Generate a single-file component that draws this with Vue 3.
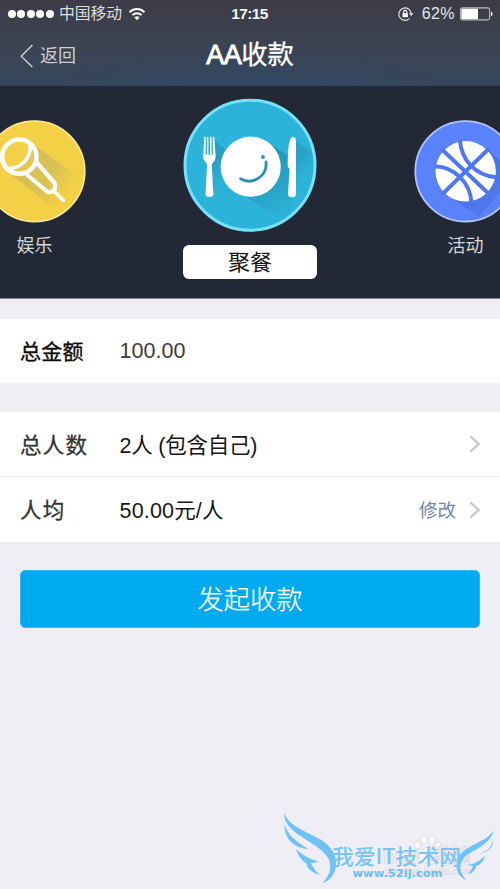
<script setup>
const signal = [0, 1, 2, 3, 4]
</script>

<template>
  <div class="screen">
    <header class="header">
      <div class="status">
        <div class="carrier">
          <i v-for="n in signal" :key="n" class="dot"></i>
          <span class="carrier-name">中国移动</span>
          <svg class="wifi" viewBox="0 0 18 14" width="18" height="14">
            <path d="M1.500 5.200a10.600 10.600 0 0 1 15 0" fill="none" stroke="#fff" stroke-width="2" />
            <path d="M4.400 8.200a6.500 6.500 0 0 1 9.200 0" fill="none" stroke="#fff" stroke-width="1.900" />
            <path d="M6.400 10.500a3.800 3.800 0 0 1 5.200 0L9 13.300z" fill="#fff" />
          </svg>
        </div>
        <div class="time">17:15</div>
        <div class="power">
          <svg viewBox="0 0 16 14" width="16" height="14">
            <path d="M13.200 6.200A6.200 6.200 0 1 0 11.400 11.600" fill="none" stroke="#e4e5e8" stroke-width="1.200" />
            <path d="M10.800 6.200h4.800l-2.400 2.800z" fill="#e4e5e8" />
            <rect x="4.500" y="6.200" width="5.400" height="4" fill="#fff" />
            <path d="M5.600 6.400V5a1.600 1.600 0 0 1 3.200 0v1.400" fill="none" stroke="#fff" stroke-width="1.100" />
          </svg>
          <span class="percent">62%</span>
          <svg viewBox="0 0 33 14" width="33" height="14">
            <rect x=".6" y=".9" width="29" height="12" rx="1.800" fill="none" stroke="#b9bbc1" stroke-width="1.100" />
            <rect x="1.400" y="1.700" width="16.600" height="10.400" fill="#fff" />
            <path d="M31 4.600q1.600.5 1.600 2.300T31 9.200z" fill="#fff" />
          </svg>
        </div>
      </div>
      <div class="nav">
        <div class="back">
          <svg viewBox="0 0 14 24" width="14" height="24">
            <path d="M12.400 1L1.200 12.200 12.400 23" fill="none" stroke="#d3d7dd" stroke-width="1.300" />
          </svg>
          <span>返回</span>
        </div>
        <h1 class="title"><span class="latin">AA</span>收款</h1>
      </div>
    </header>

    <section class="carousel">
      <div class="slide side">
        <svg viewBox="-17 120 103 103" width="103" height="103">
          <defs>
            <linearGradient id="micShade" gradientUnits="userSpaceOnUse" x1="30" y1="160" x2="70" y2="191">
              <stop offset="0" stop-color="#d5bd52" />
              <stop offset=".5" stop-color="#dbc254" />
              <stop offset="1" stop-color="#f4d047" />
            </linearGradient>
          </defs>
          <circle cx="34.500" cy="171.300" r="50.500" fill="#f4d047" />
          <path d="M33 144L84 181Q78 200 60 213L8 172z" fill="url(#micShade)" />
          <circle cx="34.500" cy="171.300" r="50.300" fill="none" stroke="#fbe694" stroke-width="1.700" />
          <circle cx="19.300" cy="156.700" r="17" fill="#f4d047" />
          <path d="M19.300 174a17 17 0 0 0 17-17Q34 149 30 147q-2 18-24 22 6 5 13.300 5z" fill="#e4c64e" />
          <g fill="none" stroke="#fff" stroke-width="4.600" stroke-linecap="round" stroke-linejoin="round">
            <circle cx="19.300" cy="156.700" r="17.200" />
            <path d="M30 145.500Q31.500 155 23.500 162.500T6 168" stroke-width="3.600" />
            <path d="M36.700 162.500L54.300 182.500q1.600 3 0 7.500-3.300 3.300-7.300 1.500L26.700 174.500" stroke-width="4.200" />
            <path d="M54 191l9.200 9.400" stroke-width="3.800" />
          </g>
        </svg>
        <span class="caption">娱乐</span>
      </div>

      <div class="slide main">
        <svg viewBox="183 98 134 134" width="134" height="134">
          <defs>
            <linearGradient id="dishShade" gradientUnits="userSpaceOnUse" x1="255" y1="170" x2="286" y2="214">
              <stop offset="0" stop-color="#2499bb" />
              <stop offset=".55" stop-color="#28a6ca" />
              <stop offset="1" stop-color="#2cb3d9" />
            </linearGradient>
            <linearGradient id="forkShade" gradientUnits="userSpaceOnUse" x1="211" y1="165" x2="225" y2="179">
              <stop offset="0" stop-color="#269fc2" />
              <stop offset="1" stop-color="#2cb3d9" />
            </linearGradient>
            <linearGradient id="knifeShade" gradientUnits="userSpaceOnUse" x1="295" y1="160" x2="309" y2="175">
              <stop offset="0" stop-color="#28a3c7" />
              <stop offset="1" stop-color="#2cb3d9" />
            </linearGradient>
          </defs>
          <circle cx="250" cy="165.200" r="66" fill="#2cb3d9" />
          <path d="M214 140L238 160 238 212 209 197z" fill="url(#forkShade)" />
          <path d="M270 143L312 174 286 221 229 187z" fill="url(#dishShade)" />
          <path d="M295 140L313 153V175L300 207 290 197z" fill="url(#knifeShade)" />
          <circle cx="250" cy="165.200" r="65" fill="none" stroke="#77e1fb" stroke-width="3" />
          <path d="M204.400 136.800h1.300v18h1.300v-18h1.400v18h1.700v-18h1.400v18h1.300v-18h1.500l1.400 20.500q0 2.200-2.700 5.200l-1.200 2 1.500 29.300q0 3.300-3.900 3.300t-3.900-3.300l1.600-29.300-1.200-2q-2.800-3-2.800-5.200z" fill="#fff" />
          <circle cx="250.700" cy="166.700" r="30.100" fill="#fff" />
          <path d="M240.600 178.700A17 17 0 0 0 266 162" fill="none" stroke="#2293b2" stroke-width="2.800" stroke-linecap="round" />
          <circle cx="263" cy="157" r="1.900" fill="#2293b2" />
          <path d="M293 136.700q3 0 3 4.300v53q0 3.300-4 3.300t-4-3.300l1.600-25-1.900-2.500q0-23 3-28 1-1.800 2.300-1.800z" fill="#fff" />
        </svg>
        <span class="selected">聚餐</span>
      </div>

      <div class="slide side">
        <svg viewBox="414 120 103 103" width="103" height="103">
          <defs>
            <linearGradient id="ballShade" gradientUnits="userSpaceOnUse" x1="475" y1="180" x2="497" y2="212">
              <stop offset="0" stop-color="#4a74e6" />
              <stop offset="1" stop-color="#5179ed" />
            </linearGradient>
          </defs>
          <circle cx="465.500" cy="171.300" r="50.500" fill="#5b82fd" />
          <path d="M488 150L515 175 479 217 446 194z" fill="url(#ballShade)" />
          <circle cx="465.500" cy="171.300" r="50.200" fill="none" stroke="#b1c3fd" stroke-width="1.800" />
          <circle cx="465.700" cy="171.300" r="30.200" fill="#fff" />
          <g fill="none" stroke="#4f78ee" stroke-width="3.900">
            <path d="M442 194.500L489 148.500M442 149.500L489 194" />
            <path d="M459.800 140C461.500 159 474 175.500 497 177.500M434.500 166.300C455 167 470.500 183 471.500 203" />
          </g>
        </svg>
        <span class="caption">活动</span>
      </div>
    </section>

    <main>
      <div class="group amount">
        <div class="row">
          <span class="label strong">总金额</span>
          <span class="value money">100.00</span>
        </div>
      </div>

      <div class="group">
        <div class="row people">
          <span class="label">总人数</span>
          <span class="value count">2人 (包含自己)</span>
          <svg class="chevron" viewBox="0 0 12 18" width="12" height="18">
            <path d="M1.300 1.200L9.800 8.900 1.300 16.600" fill="none" stroke="#c7c7cc" stroke-width="2.200" />
          </svg>
        </div>
        <div class="row average">
          <span class="label">人均</span>
          <span class="value per">50.00元/人</span>
          <span class="edit">修改</span>
          <svg class="chevron" viewBox="0 0 12 18" width="12" height="18">
            <path d="M1.300 1.200L9.800 8.900 1.300 16.600" fill="none" stroke="#c7c7cc" stroke-width="2.200" />
          </svg>
        </div>
      </div>

      <button class="submit">发起收款</button>
    </main>

    <svg class="watermark" viewBox="270 800 230 89" width="230" height="89">
      <g>
        <g fill="#f9f9fb" stroke="#d9d9de" stroke-width=".8">
          <ellipse cx="417.500" cy="845" rx="3" ry="4" />
          <ellipse cx="424" cy="839.800" rx="3.200" ry="4.200" />
          <ellipse cx="432" cy="840" rx="3.200" ry="4.200" />
          <ellipse cx="438" cy="846" rx="3" ry="4" />
          <path d="M428 847q4 0 6 5 5 4 2 9-3 3-8 1-6 2-8-1-3-5 2-9 2-5 6-5z" />
        </g>
        <text x="383" y="864" class="baidu" textLength="88">Bai 经验</text>
        <text x="386" y="875" class="baidu-url" textLength="87">jingyan.baidu.com</text>
      </g>
      <g fill="#6fc2f8">
        <path d="M284 813C288 824 300 829 314 836 329 843 337 853 336 865 335 875 330 881 322 883 331 875 332 866 328 858 322 848 309 842 299 835 289 828 284 822 284 813z" />
        <path d="M284.500 824C288 836 296 841 308 849 293 848 284 838 284.500 824z" />
        <path d="M296 849C303 856 311 859 319 862L311 863Q314 870 320 875 307 871 306 863 299 859 296 849z" />
        <path d="M494 830C491 842 479 848 468 854 458 861 458 873 467 880 456 877 454 864 460 855 468 844 487 842 494 830z" />
        <path d="M493 839C492 849 486 852 477 854 485 853 494 850 493 839z" />
        <path d="M485 856C483 863 479 865 476 866 476 870 472 873 468 874 472 870 472 868 473 866L468 865Q478 863 485 856z" />
      </g>
      <text x="332" y="864" class="site" textLength="129" lengthAdjust="spacingAndGlyphs">我爱IT技术网</text>
      <text x="352.500" y="877" class="site-url" textLength="90" lengthAdjust="spacingAndGlyphs">www.52ij.com</text>
    </svg>
  </div>
</template>

<style>
body {
  background: #efeef4;
}
</style>

<style scoped>
.screen {
  position: relative;
  box-sizing: border-box;
  width: 500px;
  height: 889px;
  overflow: hidden;
  background: #efeef4;
  font-family: "Liberation Sans", "Noto Sans CJK SC", sans-serif;
}
.screen svg {
  display: block;
  flex: none;
}
.header {
  height: 86px;
  background: radial-gradient(ellipse 190px 35px at 50% 100%, rgba(46, 75, 105, 0.45), rgba(46, 75, 105, 0)), linear-gradient(#3c3b46, #3c4453 55%, #35455d);
}
.status {
  display: grid;
  grid-template-columns: 1fr auto 1fr;
  align-items: center;
  height: 28px;
  padding: 0 9px 0 8px;
  color: #fff;
}
.carrier,
.power {
  display: flex;
  align-items: center;
}
.power {
  justify-content: flex-end;
  margin-right: -2px;
}
.dot {
  width: 8px;
  height: 8px;
  margin-right: 1.400px;
  border-radius: 50%;
  background: #fff;
}
.carrier-name {
  margin-left: 4px;
  font-size: 15.800px;
  line-height: 28px;
  color: #dcdde0;
}
.wifi {
  margin-left: 6px;
}
.time {
  font-size: 15.500px;
  font-weight: bold;
  letter-spacing: -0.600px;
  color: #f4f4f5;
}
.percent {
  margin: 0 5px 0 8px;
  font-size: 16px;
  letter-spacing: 0.400px;
  color: #e6e7e9;
}
.nav {
  display: grid;
  grid-template-columns: 1fr auto 1fr;
  height: 56px;
}
.back {
  display: flex;
  align-items: center;
  gap: 6px;
  padding-left: 20px;
  font-size: 18px;
  line-height: 54px;
  color: #ccd0d6;
}
.title {
  margin: 0;
  font-size: 26.300px;
  line-height: 54px;
  font-weight: 400;
  color: #fff;
  -webkit-text-stroke: 0.300px #fff;
}
.latin {
  font-size: 27px;
  letter-spacing: -0.500px;
  -webkit-text-stroke: 0.900px #fff;
}
.carousel {
  display: grid;
  grid-template-columns: repeat(3, 215.500px);
  justify-content: center;
  box-sizing: border-box;
  height: 213px;
  overflow: hidden;
  border-bottom: 1px solid #85868d;
  background: #222835;
}
.slide {
  display: flex;
  flex-direction: column;
  align-items: center;
}
.side {
  padding-top: 34px;
}
.main {
  padding-top: 12px;
}
.caption {
  margin-top: 8px;
  font-size: 18px;
  line-height: 30px;
  color: #d5d7da;
}
.selected {
  width: 134px;
  height: 34px;
  margin-top: 13px;
  border-radius: 6px;
  background: #fff;
  font-size: 22px;
  line-height: 35px;
  text-align: center;
  color: #161616;
}
.group {
  margin-top: 29px;
  background: #fff;
}
.amount {
  margin-top: 20px;
}
.row {
  display: flex;
  align-items: center;
  box-sizing: border-box;
  height: 64px;
  padding: 0 19px 0 20px;
}
.average {
  height: 66px;
  border-top: 1px solid #ededf0;
}
.label {
  width: 99.600px;
  flex: none;
  padding-bottom: 2px;
  font-size: 21.500px;
  font-weight: 400;
  letter-spacing: 1.200px;
  color: #333;
  -webkit-text-stroke: 0.300px #333;
}
.strong {
  font-size: 21px;
  letter-spacing: 0.300px;
  color: #0c0c0c;
  -webkit-text-stroke: 0.350px #0c0c0c;
}
.value {
  flex: 1;
  padding-bottom: 1px;
  font-size: 21.500px;
  color: #161616;
}
.money {
  padding-bottom: 0;
  color: #3c3c3c;
}
.count {
  letter-spacing: -0.250px;
}
.per {
  padding-bottom: 3px;
  letter-spacing: 0.150px;
}
.edit {
  margin-right: 13px;
  padding-bottom: 1px;
  font-size: 18.500px;
  color: #6f85ae;
}
.submit {
  display: block;
  width: 460px;
  height: 58px;
  margin: 28px auto 0;
  padding: 0 0 2px;
  border: 1px solid #35b8f0;
  border-radius: 5px;
  background: #00aaf0;
  font-family: "Noto Sans CJK SC", sans-serif;
  font-size: 26.300px;
  font-weight: 300;
  line-height: 54px;
  color: #fff;
  -webkit-text-stroke: 0.250px #fff;
}
.watermark {
  position: absolute;
  right: 0;
  bottom: 0;
}
.baidu {
  fill: #f4f4f7;
  stroke: #d3d3d9;
  stroke-width: 0.700px;
  font: bold 20px "Liberation Sans", "Noto Sans CJK SC", sans-serif;
}
.baidu-url {
  fill: #dedee3;
  font: bold 10px "Liberation Sans", sans-serif;
}
.site {
  fill: #78c4f8;
  font: 500 21px "Noto Sans CJK SC", sans-serif;
}
.site-url {
  fill: #6dbcf6;
  font: bold 11px "DejaVu Sans", sans-serif;
}
</style>
